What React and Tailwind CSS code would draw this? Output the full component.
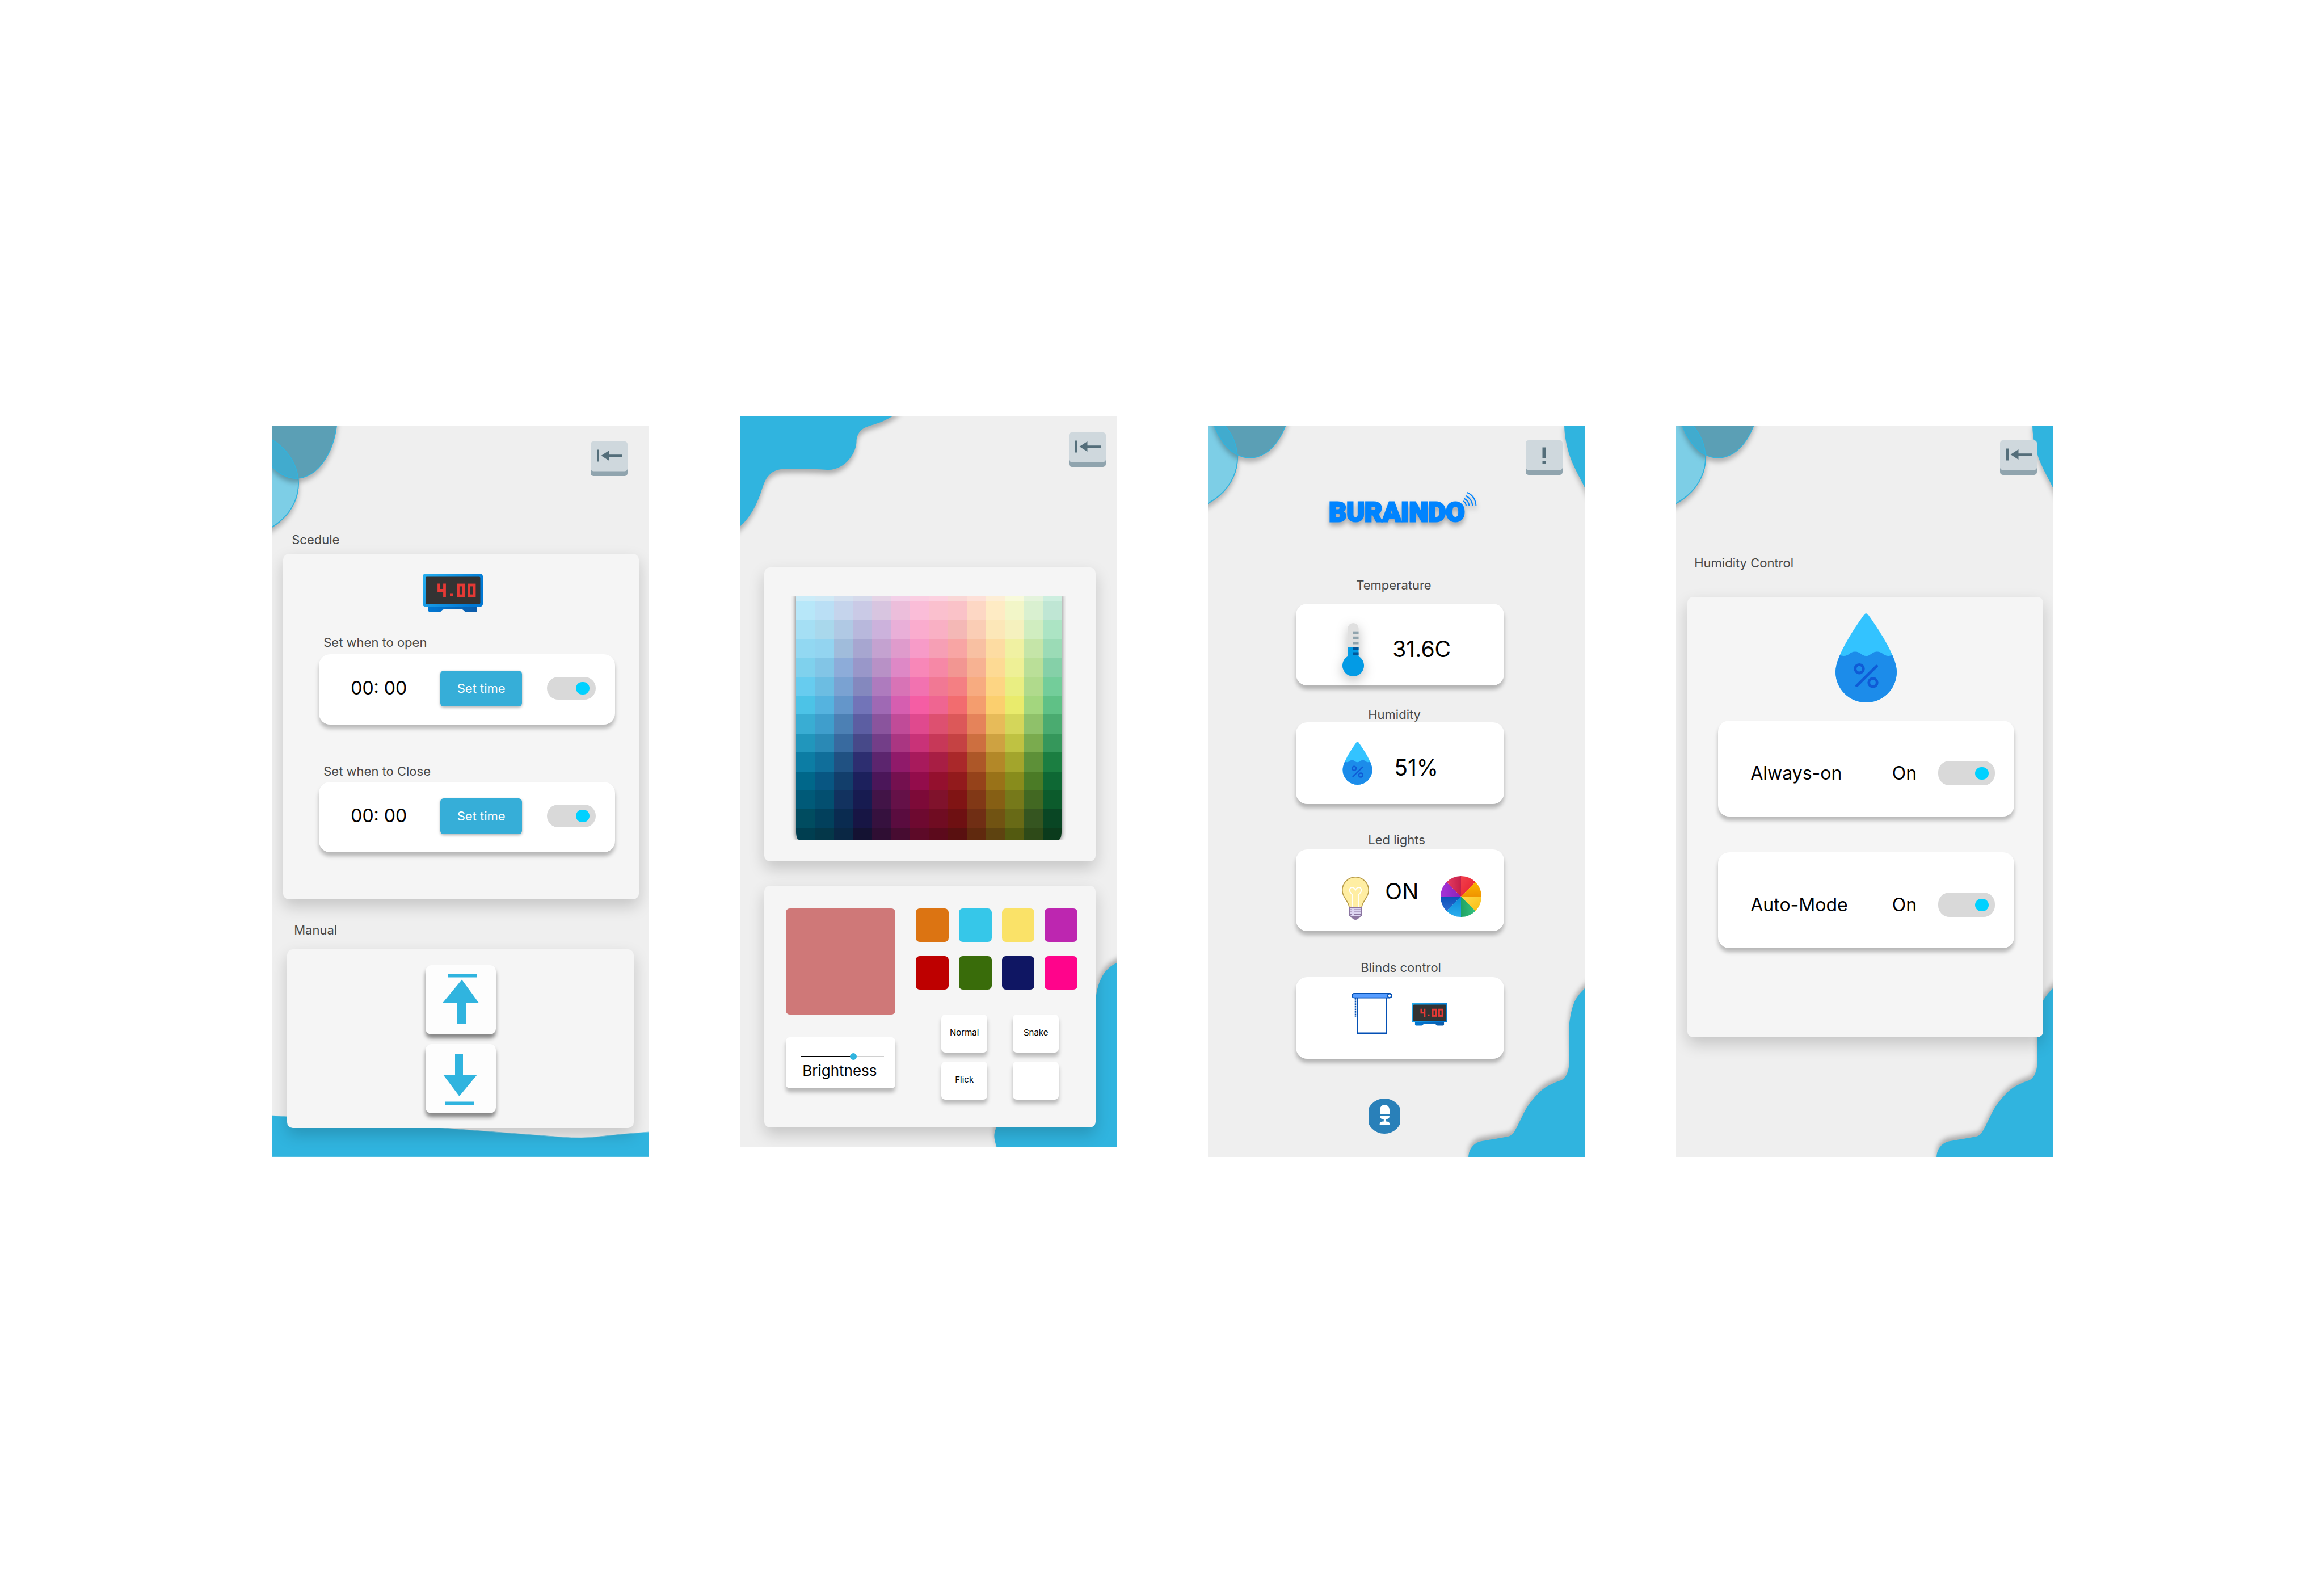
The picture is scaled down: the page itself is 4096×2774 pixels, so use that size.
import React, { useId } from "react";

const PALETTE = `
ccecf8 d0e9f5 d4e0ef d6daeb e5d4e6 f3d0e8 facee2 fcd1e0 f9d7d6 fde0d8 fdeed6 f8fadb e4f3dc cdeedf
b7e7f9 badff5 c5d4ec cacae6 d8c5e0 ecbedb fabdd8 fac0ce fac2c8 fdd7c4 feebc4 f2f6c8 d9f0d0 bfe6d4
a5dff4 a9d8ec b0c9e4 b8b8dc ccb2dc e9afd8 faacce f9b0c4 f4b8b6 facdb5 fce7b8 f5f1be d0edc0 ace4c4
92d8f2 93d4f0 a0bcdb a7a6d0 c4a2d0 df9bcc f79bc8 f69fb5 f8a5a4 f8c0a2 fddca2 f0f1a2 c5e5a8 9bdbb6
7fd1ed 82c5e6 8dacd9 9997c9 b891c6 de88c6 f887b8 f688a6 f29692 f7b292 fdda94 eef096 badf98 85d0a8
67ccef 6cbde2 7aa2d2 8488be ae7bbe d873b6 f272b0 f17894 f47f83 f7ab80 fdd583 e9ee82 b0da8c 73cd9a
4cc3e7 55b3df 6496ca 7274b8 9f69b4 d65eb0 f55da4 ef6591 f26c6f f49d6e fbcf6e e9eb6c a3d67e 5fc186
39add3 3f9ecc 4c80b4 5c5ea2 8a549d c04b98 e0498e dd5070 dc5859 e5835a e7bb59 d4d65a 8fc16a 4aab70
2196bc 2a89b5 386a9f 474989 733e88 aa3682 c93278 c73858 c54243 cd6f40 cea241 bfc242 7aab4e 35975b
0c7da4 106e9a 205182 2d2e70 5c256e 901a6a a81a5c a81e44 aa282a ad5728 b38828 a3a52c 5d9038 1b7e41
00678a 085682 123e6b 1c205c 4b1659 74104f 930c4b 94102e 921a1c 95421a 997218 888c1c 4b7b26 0e6834
005a78 034f70 12325f 171b50 421447 651148 7d0a38 80122c 801414 813816 865f14 76791a 426822 0c5b2c
004c60 02405c 0a2b50 171544 36113e 5a0c3f 6e0930 700c22 6e1012 702e14 715312 686a16 355520 094624
003e50 043749 0a2744 141232 2f0e33 470c31 5d0a28 5c0a1c 591010 60290e 5e4310 535a10 2e4a18 0b3b1c
`
  .trim()
  .split("\n")
  .map((row) => row.trim().split(" "));

function Screen({ label, className = "", art, children }) {
  return (
    <main
      aria-label={label}
      className={`relative isolate flex flex-col overflow-hidden bg-[#efefef] ${className}`}
    >
      <div aria-hidden="true" className="pointer-events-none absolute inset-0 -z-10">
        {art}
      </div>
      {children}
    </main>
  );
}

function Panel({ className = "", children }) {
  return (
    <section
      className={`flex flex-col rounded-[10px] bg-[#f5f5f5] shadow-[0_12px_28px_rgba(0,0,0,0.18)] ${className}`}
    >
      {children}
    </section>
  );
}

const CARD = "rounded-[20px] bg-white shadow-[0_7px_7px_rgba(0,0,0,0.25)]";
const LABEL = "text-[22px] leading-[27px] text-[#484848]";

/* ---------- background shapes ---------- */

function Bubbles({ dark, light }) {
  const id = useId();
  const darkShape = { cx: dark[0], cy: dark[1], rx: 72.5, ry: 115 };
  const lightShape = { cx: light[0], cy: light[1], rx: 112, ry: 95 };
  return (
    <svg width="200" height="220" className="absolute left-0 top-0 overflow-visible">
      <clipPath id={id}>
        <ellipse {...lightShape} />
      </clipPath>
      <g stroke="#30b4df" strokeWidth="1.5">
        <ellipse {...lightShape} fill="#7dcee6" className="drop-shadow-[0_7px_4px_rgba(0,0,0,0.25)]" />
        <ellipse {...darkShape} fill="#5b9fb5" className="drop-shadow-[0_7px_4px_rgba(0,0,0,0.25)]" />
        <ellipse {...darkShape} fill="#41abce" clipPath={`url(#${id})`} />
        <ellipse {...lightShape} fill="none" />
      </g>
    </svg>
  );
}

function RightEdge() {
  return (
    <svg width="40" height="112" viewBox="625 0 40 112" className="absolute right-0 top-0 overflow-visible">
      <path
        d="M628 -4 C628 18 633 42 642 64 C649 80 657 94 665 110 L680 140 L680 -4Z"
        fill="#30b4df"
        className="drop-shadow-[0_7px_4px_rgba(0,0,0,0.25)]"
      />
    </svg>
  );
}

function RightSplash() {
  return (
    <svg width="215" height="300" viewBox="450 988 215 300" className="absolute bottom-0 right-0 overflow-visible">
      <path
        d="M700 960 L665 990 C656 999 649 1007 645 1017 C640 1030 636 1050 636 1071 C636 1090 637 1105 637 1116 C637 1135 632 1149 622 1153 C612 1156 605 1160 597 1164 C586 1170 572 1186 562 1201 C553 1216 549 1228 543 1238 C539 1246 536 1250 529 1252 C518 1254 500 1257 483 1260 C470 1262 459 1273 459 1290 L459 1310 L700 1310Z"
        fill="#30b4df"
        className="drop-shadow-[0_-7px_4px_rgba(0,0,0,0.28)]"
      />
    </svg>
  );
}

function Wave() {
  return (
    <svg
      viewBox="0 0 665 76"
      preserveAspectRatio="none"
      className="absolute bottom-0 left-0 h-[76px] w-full"
    >
      <path
        d="M0 3 L27 5 L302 25 L511 41 Q546 44 578 40 Q622 35 665 32 V76 H0Z"
        fill="#30b4df"
        stroke="#6fc6e3"
        strokeWidth="1"
      />
    </svg>
  );
}

function TopSplash() {
  return (
    <svg width="280" height="200" className="absolute left-0 top-0 overflow-visible">
      <path
        d="M-10 -10 H284 C274 -2 264 4 253 9 C242 14 232 16 222 20 C212 24 206 33 205.500 44 C206 56 199 69 193 76 C184 88 168 96 154 95 C130 93 100 93 78 93.500 C66 94 58 98 54 102 C46 109 43 117 38 132 C31 154 18 180 0 195 L-10 204Z"
        fill="#30b4df"
        className="drop-shadow-[0_7px_4px_rgba(0,0,0,0.28)]"
      />
    </svg>
  );
}

function CornerSplash() {
  return (
    <svg width="225" height="330" viewBox="440 958 225 330" className="absolute bottom-0 right-0 overflow-visible">
      <path
        d="M690 950 L665 963.500 C655 968 643 977 636 993 C631 1004 628 1015 627 1032 C624 1130 600 1180 520 1200 C480 1212 458 1232 452 1254 C447 1266 447 1271 453 1290 L460 1310 H690Z"
        fill="#30b4df"
        className="drop-shadow-[0_-7px_4px_rgba(0,0,0,0.28)]"
      />
    </svg>
  );
}

/* ---------- icons ---------- */

function KeyButton({ label, className = "", children }) {
  return (
    <button type="button" aria-label={label} className={`h-[61px] w-[65px] self-end ${className}`}>
      <svg viewBox="0 0 65 61" className="block h-full w-full">
        <rect y="10" width="65" height="51" rx="5" fill="#90a4ae" />
        <rect width="65" height="52.5" rx="5" fill="#cfd8dd" />
        {children}
      </svg>
    </button>
  );
}

function BackButton({ className }) {
  return (
    <KeyButton label="Back" className={className}>
      <g fill="#546e7a">
        <rect x="11" y="14.5" width="4" height="21" />
        <path d="M18.500 25 L32.500 16 V34Z" />
        <rect x="31" y="23.200" width="25" height="3.800" />
      </g>
    </KeyButton>
  );
}

function Clock({ className }) {
  const id = useId();
  return (
    <svg viewBox="0 0 106 68" role="img" aria-label="Clock" className={className}>
      <defs>
        <linearGradient id={`${id}a`} x1="0" y1="0" x2="1" y2="0.4">
          <stop offset="0" stopColor="#27b0ef" />
          <stop offset="1" stopColor="#0078d4" />
        </linearGradient>
        <linearGradient id={`${id}b`} x1="0" x2="1">
          <stop offset="0" stopColor="#0078d4" />
          <stop offset="1" stopColor="#0d5ba8" />
        </linearGradient>
      </defs>
      <path
        d="M10 54 H96 V65 Q96 67.500 93 67.500 H77 Q74 67.500 72 64.500 Q71 63 69 63 H37 Q35 63 34 64.500 Q32 67.500 29 67.500 H13 Q10 67.500 10 65Z"
        fill={`url(#${id}b)`}
      />
      <rect width="106" height="58.5" rx="5" fill={`url(#${id}a)`} />
      <rect x="5" y="5.5" width="96.500" height="48" rx="2" fill="#333" />
      <g fill="none" stroke="#e53935" strokeWidth="4.800">
        <path d="M28.500 17.500 V29.500 H38.500 M38.500 17.500 V41.500" />
        <rect x="62.500" y="20" width="9.500" height="19" />
        <rect x="81.500" y="20" width="9.500" height="19" />
      </g>
      <rect x="48" y="34.500" width="5" height="5" fill="#e53935" />
    </svg>
  );
}

function Drop({ className }) {
  const id = useId();
  const shape = "M51 1.500 Q54 -1 57 1.500 C71 21 108 74 108 103 A54 54 0 0 1 0 103 C0 74 37 21 51 1.500Z";
  return (
    <svg viewBox="0 0 108 157" role="img" aria-label="Humidity" className={className}>
      <clipPath id={id}>
        <path d={shape} />
      </clipPath>
      <path d={shape} fill="#33c3ff" />
      <g clipPath={`url(#${id})`}>
        <path
          d="M-3 66 Q5 75 14.500 75 C24 75 25 67.500 34.500 67.500 C44 67.500 46 75 54 75 C62 75 64 67.500 73.500 67.500 C83 67.500 84 75 93.500 75 Q103 75 111 66 V160 H-3Z"
          fill="#1c8cea"
        />
      </g>
      <g fill="none" stroke="#0f5bd6" strokeWidth="4.800" strokeLinecap="round">
        <circle cx="42" cy="97.700" r="7.300" />
        <circle cx="66" cy="122" r="7.300" />
        <path d="M72.500 93 L37.500 127.500" />
      </g>
    </svg>
  );
}

function Thermometer({ className }) {
  return (
    <svg viewBox="0 0 38 94" role="img" aria-label="Temperature" className={className}>
      <path d="M9.500 44 V9.500 A9.500 9.500 0 0 1 28.500 9.500 V44Z" fill="#e0e0e0" />
      <path d="M9.500 42.500 H28.500 V58.500 A19 19 0 1 1 9.500 58.500Z" fill="#039be5" />
      <g fill="#90a4ae">
        <rect x="19" y="14.700" width="9.500" height="4.500" />
        <rect x="19" y="23.800" width="9.500" height="4.500" />
        <rect x="19" y="33" width="9.500" height="4.500" />
      </g>
      <g fill="#01579b">
        <rect x="19" y="42.500" width="9.500" height="4.500" />
        <rect x="19" y="51.500" width="9.500" height="4.500" />
      </g>
    </svg>
  );
}

function Bulb({ className }) {
  return (
    <svg viewBox="0 0 48 76" role="img" aria-label="Light bulb" className={className}>
      <path
        d="M13 55 C13 43 0.800 38 0.800 24 A23.200 23.200 0 0 1 47.200 24 C47.200 38 35 43 35 55Z"
        fill="#ffeea3"
        stroke="#b79a47"
        strokeWidth="1.600"
      />
      <path
        d="M19 54 V33 C18 30 13.500 28 13.500 24 C13.500 18 21 17 24 23.500 C27 17 34.500 18 34.500 24 C34.500 28 30 30 29 33 V54"
        fill="none"
        stroke="#fff"
        strokeWidth="1.800"
      />
      <path d="M12 54 H36 V67 Q35 70 31 71.500 Q28 76 24 76 Q20 76 17 71.500 Q13 70 12 67Z" fill="#8b75a1" />
      <path d="M14 55.500 H34 V67 L31 70 H17 L14 67Z" fill="#dcd5f2" />
      <path
        d="M14 57.500 H18 V59 H14Z M22 57.500 H34 V59 H22Z M14 61.500 H18 V63 H14Z M22 61.500 H34 V63 H22Z M14 65.500 H18 V67 H14Z M22 65.500 H34 V67 H22Z"
        fill="#8b75a1"
      />
    </svg>
  );
}

function ColorWheel({ className }) {
  const id = useId();
  const slices = [
    ["M0 0V-36A36 36 0 0 1 25.460 -25.460Z", "#f2404c", "#e61e2e"],
    ["M0 0L25.460 -25.460A36 36 0 0 1 36 0Z", "#fbb500", "#f09400"],
    ["M0 0H36A36 36 0 0 1 25.460 25.460Z", "#ffd94a", "#f8bd10"],
    ["M0 0L25.460 25.460A36 36 0 0 1 0 36Z", "#36c280", "#1fa363"],
    ["M0 0V36A36 36 0 0 1 -25.460 25.460Z", "#0a86d8", "#2aaeee"],
    ["M0 0L-25.460 25.460A36 36 0 0 1 -36 0Z", "#0b50b8", "#2c6cd0"],
    ["M0 0H-36A36 36 0 0 1 -25.460 -25.460Z", "#8a22b8", "#a534d8"],
    ["M0 0L-25.460 -25.460A36 36 0 0 1 0 -36Z", "#e63c62", "#c4204a"],
  ];
  return (
    <svg viewBox="-36 -36 72 72" className={className}>
      {slices.map(([d, from, to], i) => (
        <g key={d}>
          <linearGradient
            id={`${id}${i}`}
            x1={i === 3 || i === 6 ? 1 : 0}
            x2={i === 1 || (i > 2 && i < 7) ? 0 : 1}
            y1="0"
            y2={i === 7 || i === 3 || i === 6 ? 0 : 1}
          >
            <stop offset="0" stopColor={from} />
            <stop offset="1" stopColor={to} />
          </linearGradient>
          <path d={d} fill={`url(#${id}${i})`} />
        </g>
      ))}
    </svg>
  );
}

function Blinds({ className }) {
  return (
    <svg viewBox="0 0 72 72" className={className}>
      <g fill="none" stroke="#0551b5">
        <path d="M7 9 V42" strokeWidth="2.500" strokeDasharray="2.800 1.800" />
        <path d="M10.500 8 V71 H61.500 V8" strokeWidth="2" />
        <path d="M10 70.500 H62" strokeWidth="2.200" />
        <rect x="1" y="1" width="70" height="7.600" rx="3.800" fill="#579dff" strokeWidth="1.800" />
        <circle cx="67" cy="4.800" r="3.400" fill="#fff" strokeWidth="2" />
      </g>
    </svg>
  );
}

function Mic({ className }) {
  return (
    <svg viewBox="0 0 56 62" className={className}>
      <circle cx="28" cy="31" r="31" fill="#2980b9" />
      <g fill="#fff">
        <path d="M20 27.500 V19.500 A8.500 8.500 0 0 1 37 19.500 V27.500Z" />
        <path d="M20 30.500 H37 Q37 36 32 36 H25 Q20 36 20 30.500Z" />
        <rect x="26.800" y="35" width="3.400" height="7" />
        <path d="M19.500 46.500 Q19.500 40.500 25 40.500 H32 Q37.500 40.500 37.500 46.500Z" />
      </g>
    </svg>
  );
}

function Signal({ className }) {
  return (
    <svg viewBox="0 0 25 26" className={className}>
      <g fill="none" stroke="#0084ff" strokeWidth="2">
        <path d="M1 16 Q6 19 6 25" />
        <path d="M2.500 11.500 Q11 16 11.500 25" />
        <path d="M5 6.500 Q16.500 12 17.500 25" />
        <path d="M7.500 1 Q22.500 7 23.500 25" />
      </g>
    </svg>
  );
}

/* ---------- controls ---------- */

function Toggle({ label, className = "" }) {
  return (
    <input
      type="checkbox"
      role="switch"
      aria-label={label}
      defaultChecked
      className={`flex shrink-0 appearance-none items-center justify-start rounded-[20px] bg-[#d9d9d9] px-[11px] before:h-[22px] before:w-6 before:rounded-full before:bg-[#00d1ff] before:content-[''] checked:justify-end ${className}`}
    />
  );
}

function TimeRow({ label, className = "" }) {
  return (
    <div className={`flex h-[124px] items-center pb-1 pl-14 pr-[34px] ${CARD} ${className}`}>
      <time className="w-[158px] text-[32px] leading-10">00: 00</time>
      <button
        type="button"
        className="h-[63px] w-36 rounded-md bg-[#36aed8] text-[22px] leading-[27px] text-white shadow-[0_2px_5px_rgba(0,0,0,0.3)]"
      >
        Set time
      </button>
      <Toggle label={label} className="ml-auto h-10 w-[86px]" />
    </div>
  );
}

function ModeRow({ label, className = "" }) {
  return (
    <label className={`flex h-[169px] items-center pl-[57px] pr-[34px] pt-4 text-[32px] leading-10 ${CARD} ${className}`}>
      <span>{label}</span>
      <span className="ml-auto mr-[38px]">On</span>
      <Toggle label={label} className="h-[43px] w-[100px]" />
    </label>
  );
}

const KEYCARD = "rounded-[10px] bg-[#fdfdfd] shadow-[0_7px_7px_rgba(0,0,0,0.45)]";

function BlindsScreen() {
  return (
    <Screen
      label="Blinds schedule"
      className="mt-[18px] pb-[51px] pt-[27px]"
      art={
        <>
          <Bubbles dark={[43, -23]} light={[-65, 101]} />
          <Wave />
        </>
      }
    >
      <BackButton className="mr-[38px]" />
      <h2 className={`ml-[35px] mt-[99px] ${LABEL}`}>Scedule</h2>
      <Panel className="ml-5 mr-[18px] mt-[11px] pb-[83px] pl-[63px] pr-[42px] pt-[35px]">
        <Clock className="ml-[183px] h-[68px] w-[106px]" />
        <h3 className={`ml-2 mt-10 ${LABEL}`}>Set when to open</h3>
        <TimeRow label="Open on schedule" className="mt-[7px]" />
        <h3 className={`ml-2 mt-[69px] ${LABEL}`}>Set when to Close</h3>
        <TimeRow label="Close on schedule" className="mt-[5px]" />
      </Panel>
      <h2 className={`ml-[39px] mt-[41px] ${LABEL}`}>Manual</h2>
      <Panel className="mx-[27px] mt-5 items-center gap-[17px] pb-[26px] pt-7">
        <button type="button" aria-label="Raise blinds" className={`h-[122px] w-[124px] ${KEYCARD}`}>
          <svg viewBox="0 0 124 122" className="block h-full w-full" fill="#30b4df">
            <rect x="40" y="15.500" width="50" height="6" />
            <path d="M64 25.500 L93.500 66 H71.500 V103.500 H56 V66 H30.500Z" />
          </svg>
        </button>
        <button type="button" aria-label="Lower blinds" className={`h-[122px] w-[124px] ${KEYCARD}`}>
          <svg viewBox="0 0 124 122" className="block h-full w-full" fill="#30b4df">
            <path d="M52 17 H66 V54 H91 L59.500 92 L31 54 H52Z" />
            <rect x="35" y="101.500" width="50" height="6" />
          </svg>
        </button>
      </Panel>
    </Screen>
  );
}

const SWATCHES = [
  ["Orange", "bg-[#dc7412]"],
  ["Sky", "bg-[#36c7e9]"],
  ["Yellow", "bg-[#fae268]"],
  ["Purple", "bg-[#bd26b0]"],
  ["Red", "bg-[#be0000]"],
  ["Green", "bg-[#396c0a]"],
  ["Navy", "bg-[#0f1663]"],
  ["Pink", "bg-[#ff048b]"],
];

const MODES = ["Normal", "Snake", "Flick", ""];

function LightsScreen() {
  return (
    <Screen
      label="Led lights"
      className="pb-[34px] pt-[29px]"
      art={
        <>
          <TopSplash />
          <CornerSplash />
        </>
      }
    >
      <BackButton className="mr-5" />
      <Panel className="ml-[43px] mr-[38px] mt-[177px] pb-[38px] pl-12 pr-[52px] pt-[50px]">
        <div className="overflow-hidden px-2">
          <div className="grid h-[430px] grid-cols-14 grid-rows-[9px_repeat(12,33.4px)_1fr] overflow-hidden shadow-[0_0_7px_2px_rgba(0,0,0,0.4)] [border-radius:0_0_5px_5px/0_0_13px_13px]">
            {PALETTE.flatMap((row, y) =>
              row.map((hex, x) => (
                <button
                  key={`${x}-${y}`}
                  type="button"
                  aria-label={`#${hex}`}
                  style={{ backgroundColor: `#${hex}` }}
                />
              ))
            )}
          </div>
        </div>
      </Panel>
      <Panel className="ml-[43px] mr-[38px] mt-[43px] pb-[49px] pl-[38px] pr-8 pt-10">
        <div className="flex justify-between">
          <div className="flex w-[193px] flex-col gap-10">
            <div className="h-[187px] rounded-[7px] bg-[#cf7878]" />
            <label className="flex h-[90px] flex-col rounded-[7px] bg-white pl-[27px] pr-5 pt-7 text-[26px] leading-8 shadow-[0_7px_7px_rgba(0,0,0,0.25)]">
              <input
                type="range"
                min="0"
                max="100"
                defaultValue="64"
                className="h-3 w-full appearance-none bg-[linear-gradient(to_right,#000_64%,#d0d0d0_64%)] bg-[length:100%_2px] bg-center bg-no-repeat [&::-webkit-slider-thumb]:h-3 [&::-webkit-slider-thumb]:w-3 [&::-webkit-slider-thumb]:appearance-none [&::-webkit-slider-thumb]:rounded-full [&::-webkit-slider-thumb]:bg-[#30b4df]"
              />
              <span className="ml-0.5 mt-[3px]">Brightness</span>
            </label>
          </div>
          <div className="flex w-[285px] flex-col">
            <div className="grid grid-cols-4 gap-x-[18px] gap-y-[25px]">
              {SWATCHES.map(([name, bg]) => (
                <button key={name} type="button" aria-label={name} className={`h-[59px] rounded-[7px] ${bg}`} />
              ))}
            </div>
            <div className="ml-[45px] mt-11 grid grid-cols-[81px_81px] gap-x-[45px] gap-y-4">
              {MODES.map((mode) => (
                <button
                  key={mode}
                  type="button"
                  aria-label={mode || "Empty mode"}
                  className="h-[67px] rounded-[7px] bg-white pb-1 text-[15px] leading-5 shadow-[0_7px_7px_rgba(0,0,0,0.25)]"
                >
                  {mode}
                </button>
              ))}
            </div>
          </div>
        </div>
      </Panel>
    </Screen>
  );
}

function HomeScreen() {
  return (
    <Screen
      label="Home"
      className="mt-[18px] pb-[41px] pt-[25px]"
      art={
        <>
          <Bubbles dark={[74, -59]} light={[-60, 56]} />
          <RightEdge />
          <RightSplash />
        </>
      }
    >
      <KeyButton label="Alerts" className="mr-10">
        <g fill="#546e7a">
          <rect x="29.500" y="12.500" width="5.500" height="19.500" />
          <rect x="29.500" y="36.500" width="5.500" height="5" />
        </g>
      </KeyButton>
      <h1 className="ml-[213px] mt-[30px] flex h-[60px] items-start font-['Roboto',sans-serif] text-[48px] font-black leading-[60px] text-[#0084ff] drop-shadow-[0_6px_4px_rgba(0,0,0,0.3)]">
        <span className="mt-1.5 [-webkit-text-stroke:3px_#0084ff]">BURAINDO</span>
        <Signal className="-ml-1 h-[26px] w-[25px]" />
      </h1>
      <div className="flex flex-col pl-[155px] pr-[143px]">
        <h2 className={`ml-[106px] mt-[91px] ${LABEL}`}>Temperature</h2>
        <section className={`mt-[19px] flex h-36 items-start pl-[82px] ${CARD}`}>
          <Thermometer className="mt-[34px] h-[94px] w-[38px] drop-shadow-[0_7px_10px_rgba(0,0,0,0.25)]" />
          <p className="ml-[50px] mt-14 text-[39px] leading-[48px]">31.6C</p>
        </section>
        <h2 className={`ml-[127px] mt-[38px] ${LABEL}`}>Humidity</h2>
        <section className={`flex h-36 items-start pl-[82px] ${CARD}`}>
          <Drop className="mt-[34px] h-[76px] w-[53px]" />
          <p className="ml-[38px] mt-14 text-[39px] leading-[48px]">51%</p>
        </section>
        <h2 className={`ml-[127px] mt-[50px] ${LABEL}`}>Led lights</h2>
        <section className={`mt-[3px] flex h-36 items-start pl-[81px] ${CARD}`}>
          <Bulb className="mt-12 h-[76px] w-12" />
          <p className="ml-7 mt-[50px] text-[39px] leading-[48px]">ON</p>
          <button type="button" aria-label="Pick colour" className="ml-auto mr-10 mt-[47px] size-[72px]">
            <ColorWheel className="block size-full" />
          </button>
        </section>
        <h2 className={`ml-[114px] mt-[51px] ${LABEL}`}>Blinds control</h2>
        <section className={`mt-[3px] flex h-36 items-start pl-[98px] ${CARD}`}>
          <button type="button" aria-label="Blinds" className="mt-7 size-[72px]">
            <Blinds className="block size-full" />
          </button>
          <button type="button" aria-label="Schedule" className="ml-[34px] mt-[45px]">
            <Clock className="block h-[41px] w-[63px]" />
          </button>
        </section>
        <button type="button" aria-label="Voice control" className="ml-[128px] mt-[70px] h-[62px] w-14">
          <Mic className="block size-full" />
        </button>
      </div>
    </Screen>
  );
}

function HumidityScreen() {
  return (
    <Screen
      label="Humidity control"
      className="mt-[18px] pb-[211px] pt-[25px]"
      art={
        <>
          <Bubbles dark={[74, -59]} light={[-60, 56]} />
          <RightEdge />
          <RightSplash />
        </>
      }
    >
      <BackButton className="mr-[29px]" />
      <h2 className={`ml-8 mt-[142px] ${LABEL}`}>Humidity Control</h2>
      <Panel className="ml-5 mr-[18px] mt-[46px] pb-[157px] pl-[54px] pr-[51px] pt-[29px]">
        <Drop className="h-[157px] w-[108px] self-center" />
        <ModeRow label="Always-on" className="mt-8" />
        <ModeRow label="Auto-Mode" className="mt-[63px]" />
      </Panel>
    </Screen>
  );
}

export default function App() {
  return (
    <div className="min-h-screen bg-white pl-[11.7%] pr-[11.64%] pt-[733px] font-['Inter',sans-serif] text-black">
      <div className="grid grid-cols-4 items-start gap-40">
        <BlindsScreen />
        <LightsScreen />
        <HomeScreen />
        <HumidityScreen />
      </div>
    </div>
  );
}
